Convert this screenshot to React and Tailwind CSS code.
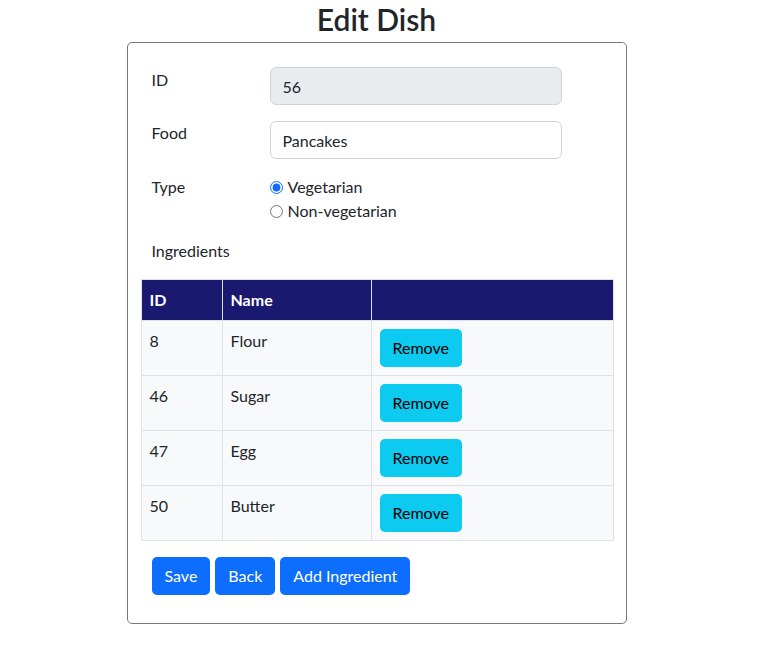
export default function App() {
  const ingredientes = [
    { id: 8, nombre: "Flour" },
    { id: 46, nombre: "Sugar" },
    { id: 47, nombre: "Egg" },
    { id: 50, nombre: "Butter" },
  ];

  return (
    <div className="min-h-screen w-[753px] bg-white text-[#212529] font-['Lato','Liberation_Sans',sans-serif] text-[16px]">
      <h2 className="text-center text-[30px] font-semibold leading-[38px] h-[38px]">Edit Dish</h2>

      <div className="mx-auto mt-[4px] w-[500px] border border-[#777] rounded-[5px] px-[13px] pt-[24px] pb-[28px]">
        {/* form rows */}
        <div className="px-[11px]">
          <div className="flex items-start mb-[16px]">
            <label className="w-[118px] leading-6 pt-[1px]">ID</label>
            <input
              type="text"
              value="56"
              disabled
              readOnly
              className="w-[292px] h-[38px] px-[12px] rounded-[6px] border border-[#ced4da] bg-[#e9ecef] text-[#212529]"
            />
          </div>

          <div className="flex items-start mb-[16px]">
            <label className="w-[118px] leading-6">Food</label>
            <input
              type="text"
              value="Pancakes"
              readOnly
              className="w-[292px] h-[38px] px-[12px] rounded-[6px] border border-[#ced4da] bg-white text-[#212529]"
            />
          </div>

          <div className="flex items-start mb-[16px]">
            <label className="w-[118px] leading-6">Type</label>
            <div className="flex flex-col">
              <label className="flex items-center leading-6">
                <input type="radio" name="tipo" checked readOnly className="m-0 mr-[5px] w-[13px] h-[13px] accent-[#0d6efd]" />
                Vegetarian
              </label>
              <label className="flex items-center leading-6">
                <input type="radio" name="tipo" readOnly className="m-0 mr-[5px] w-[13px] h-[13px]" />
                Non-vegetarian
              </label>
            </div>
          </div>

          <div className="leading-6 mb-[16px]">Ingredients</div>
        </div>

        {/* tabla ingredientes */}
        <table className="w-[473px] border-collapse border border-[#dee2e6]">
          <thead>
            <tr className="bg-[#191970] text-white h-[41px]">
              <th className="w-[81px] text-left font-bold px-[8px] border-r border-[#dee2e6]">ID</th>
              <th className="w-[149px] text-left font-bold px-[8px] border-r border-[#dee2e6]">Name</th>
              <th></th>
            </tr>
          </thead>
          <tbody>
            {ingredientes.map((ing) => (
              <tr key={ing.id} className="bg-[#f8f9fa] border-t border-[#dee2e6]">
                <td className="align-top p-[8px] leading-6 border-r border-[#dee2e6]">{ing.id}</td>
                <td className="align-top p-[8px] leading-6 border-r border-[#dee2e6]">{ing.nombre}</td>
                <td className="align-top p-[8px]">
                  <button className="h-[38px] px-[13px] rounded-[5px] bg-[#0dcaf0] text-black leading-6">
                    Remove
                  </button>
                </td>
              </tr>
            ))}
          </tbody>
        </table>

        {/* botones */}
        <div className="flex gap-[5px] px-[11px] mt-[16px]">
          <button className="h-[38px] px-[13px] rounded-[5px] bg-[#0d6efd] text-white">Save</button>
          <button className="h-[38px] px-[13px] rounded-[5px] bg-[#0d6efd] text-white">Back</button>
          <button className="h-[38px] px-[13px] rounded-[5px] bg-[#0d6efd] text-white">Add Ingredient</button>
        </div>
      </div>
    </div>
  );
}
